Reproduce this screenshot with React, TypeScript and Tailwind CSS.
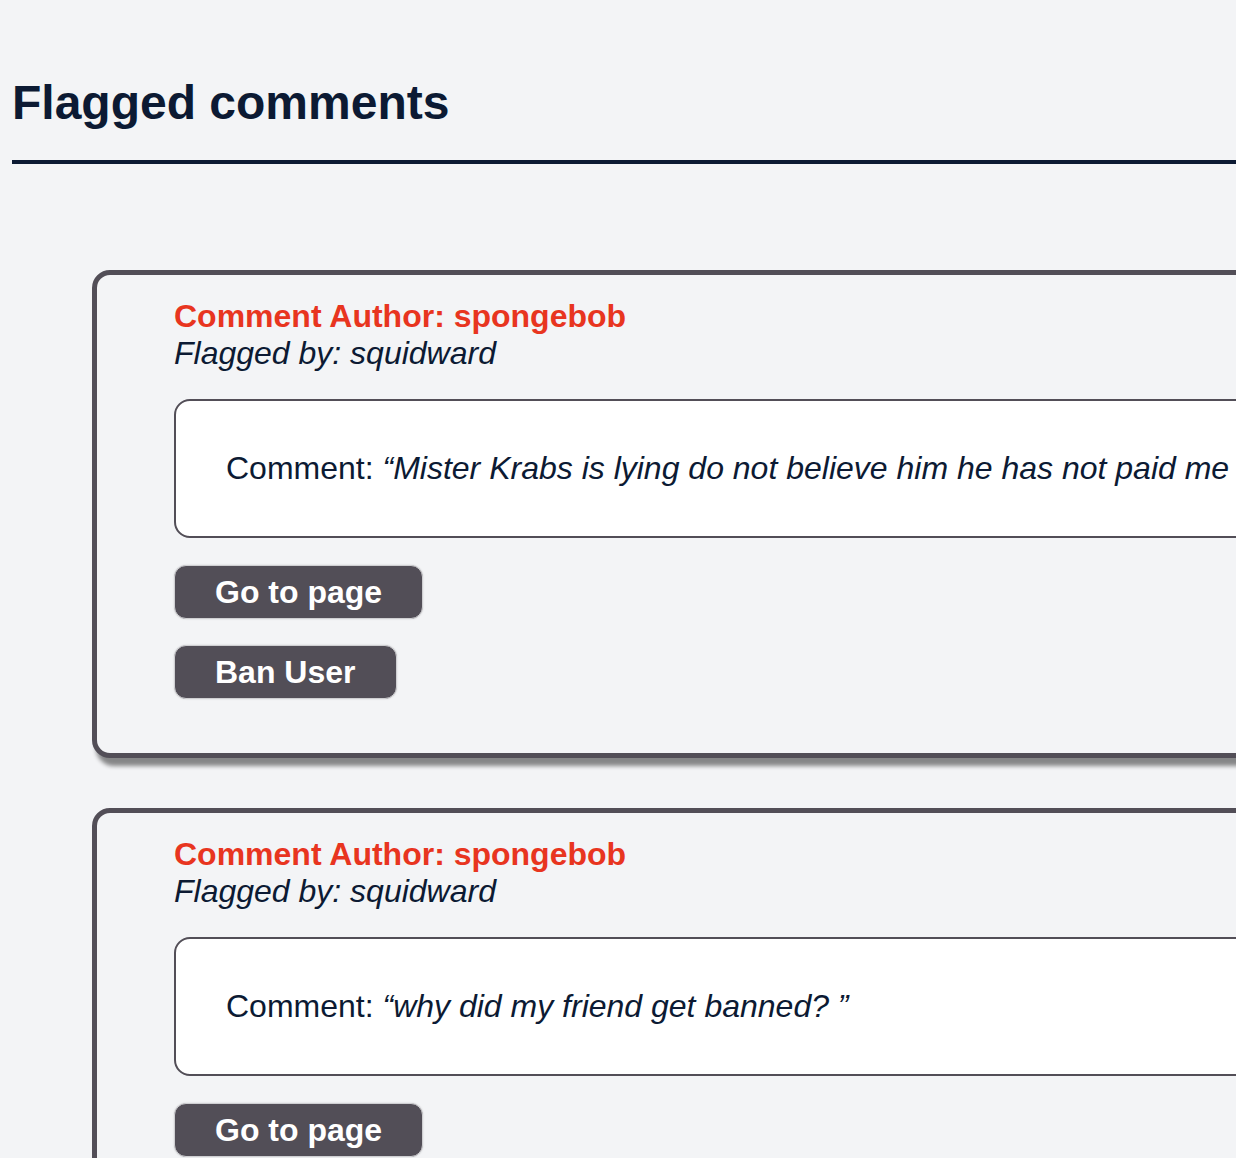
import React from "react";

const comments = [
  {
    author: "spongebob",
    flagger: "squidward",
    text: "Mister Krabs is lying do not believe him he has not paid me in weeks ”",
  },
  {
    author: "spongebob",
    flagger: "squidward",
    text: "why did my friend get banned? ”",
  },
];

function Card({ author, flagger, text }: { author: string; flagger: string; text: string }) {
  return (
    <div className="w-[1500px] rounded-[18px] border-[5px] border-[#524e57] bg-[#f3f4f6] pl-[77px] pt-[23px] pb-[54px] shadow-[4px_8px_4px_rgba(0,0,0,0.45)]">
      <div className="text-[32px] font-bold leading-[37px] text-[#e8351f]">Comment Author: {author}</div>
      <div className="text-[32px] italic leading-[37px] text-[#0c1a33]">Flagged by: {flagger}</div>
      <div className="mt-[27px] rounded-[16px] border-2 border-[#524e57] bg-white px-[50px] py-[49px] text-[32px] leading-[37px] text-[#0c1a33] whitespace-nowrap">
        Comment: <span className="italic">“{text}</span>
      </div>
      <div className="mt-[27px] flex flex-col items-start gap-[26px]">
        <button className="rounded-[12px] border border-[#cfcfd2] bg-[#524e57] px-[40px] py-[7px] text-[32px] font-bold leading-[38px] text-white shadow-[0_0_2px_rgba(0,0,0,0.15)]">
          Go to page
        </button>
        <button className="rounded-[12px] border border-[#cfcfd2] bg-[#524e57] px-[40px] py-[7px] text-[32px] font-bold leading-[38px] text-white shadow-[0_0_2px_rgba(0,0,0,0.15)]">
          Ban User
        </button>
      </div>
    </div>
  );
}

export default function App() {
  return (
    <div className="w-full min-h-screen overflow-hidden bg-[#f3f4f6]" style={{ fontFamily: '"Liberation Sans", Arial, sans-serif' }}>
      <div className="pl-[12px] pt-[75px]">
        <h1 className="w-[1400px] border-b-4 border-[#0c1a33] pb-[30px] text-[48px] font-bold leading-[55px] text-[#0c1a33]">
          Flagged comments
        </h1>
        <div className="mt-[106px] flex flex-col gap-[50px] pl-[80px] pb-[60px]">
          {comments.map((c, i) => (
            <Card key={i} {...c} />
          ))}
        </div>
      </div>
    </div>
  );
}
